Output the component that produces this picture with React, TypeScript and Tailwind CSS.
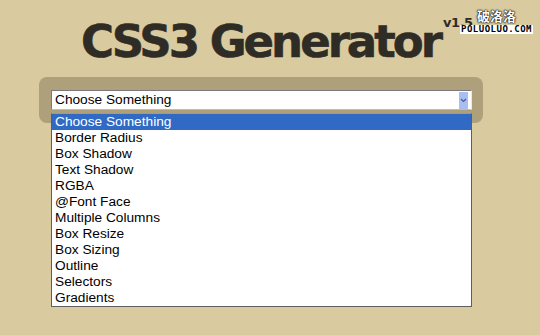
import React from "react";

const items = [
  "Choose Something",
  "Border Radius",
  "Box Shadow",
  "Text Shadow",
  "RGBA",
  "@Font Face",
  "Multiple Columns",
  "Box Resize",
  "Box Sizing",
  "Outline",
  "Selectors",
  "Gradients",
];

export default function App() {
  return (
    <div className="w-[540px] h-[335px] bg-[#d9cb9f] overflow-hidden flex flex-col" style={{ fontFamily: '"Liberation Sans", Arial, sans-serif' }}>
      <div className="relative h-[77px] pl-[81px] pt-[19px]">
        <h1
          className="text-[45px] leading-none font-bold text-[#2f2c26] tracking-[-3px] whitespace-nowrap"
          style={{ fontFamily: '"DejaVu Sans", Verdana, sans-serif', WebkitTextStroke: "0.6px #2f2c26" }}
        >
          CSS3 Generator
        </h1>
        <span
          className="absolute left-[443px] top-[16px] text-[13px] font-bold text-[#2f2c26] leading-none tracking-[-0.5px]"
          style={{ fontFamily: '"DejaVu Sans", Verdana, sans-serif' }}
        >
          v1.5
        </span>
        <div className="absolute left-[462px] top-[8px] w-[69px] flex flex-col items-center">
          <span
            className="text-[13px] leading-[16px] text-white font-bold tracking-[0px]"
            style={{ fontFamily: '"Noto Sans CJK SC", sans-serif', textShadow: "0 0 2px #000, 0 0 1px #000, 0 0 1px #000" }}
          >
            破洛洛
          </span>
          <span
            className="mt-[1px] bg-white px-[1px] text-[9px] leading-[9px] font-bold text-black tracking-[0.5px]"
            style={{ fontFamily: '"DejaVu Sans Mono", monospace' }}
          >
            POLUOLUO.COM
          </span>
        </div>
      </div>
      <div className="relative ml-[39px] w-[444px] h-[46px] rounded-[8px] bg-[#ada07b] pl-[12px] pt-[13px]">
        <div className="w-[421px] h-[20px] bg-white border border-t-[#7a7a7a] border-l-[#7a7a7a] border-r-[#e8e8e8] border-b-[#bdbdbd] flex items-center">
          <span className="flex-1 pl-[3px] text-[13.7px] text-black leading-none">Choose Something</span>
          <div className="w-[9px] h-[17px] mr-[3px] bg-[#a9bff2] flex items-center justify-center">
            <svg width="7" height="5" viewBox="0 0 7 5">
              <path d="M1 1 L3.5 3.5 L6 1" stroke="#4a5a90" strokeWidth="1.2" fill="none" />
            </svg>
          </div>
        </div>
        <div className="absolute left-[12px] top-[36px] w-[421px] bg-white border border-[#5e5e5e] border-t-[#9a9a9a]">
          {items.map((it, i) => (
            <div
              key={it}
              className={`h-[16px] pl-[3px] text-[13.7px] leading-[16px] whitespace-nowrap ${i === 0 ? "bg-[#316ac5] text-white" : "text-black"}`}
            >
              {it}
            </div>
          ))}
        </div>
      </div>
    </div>
  );
}
